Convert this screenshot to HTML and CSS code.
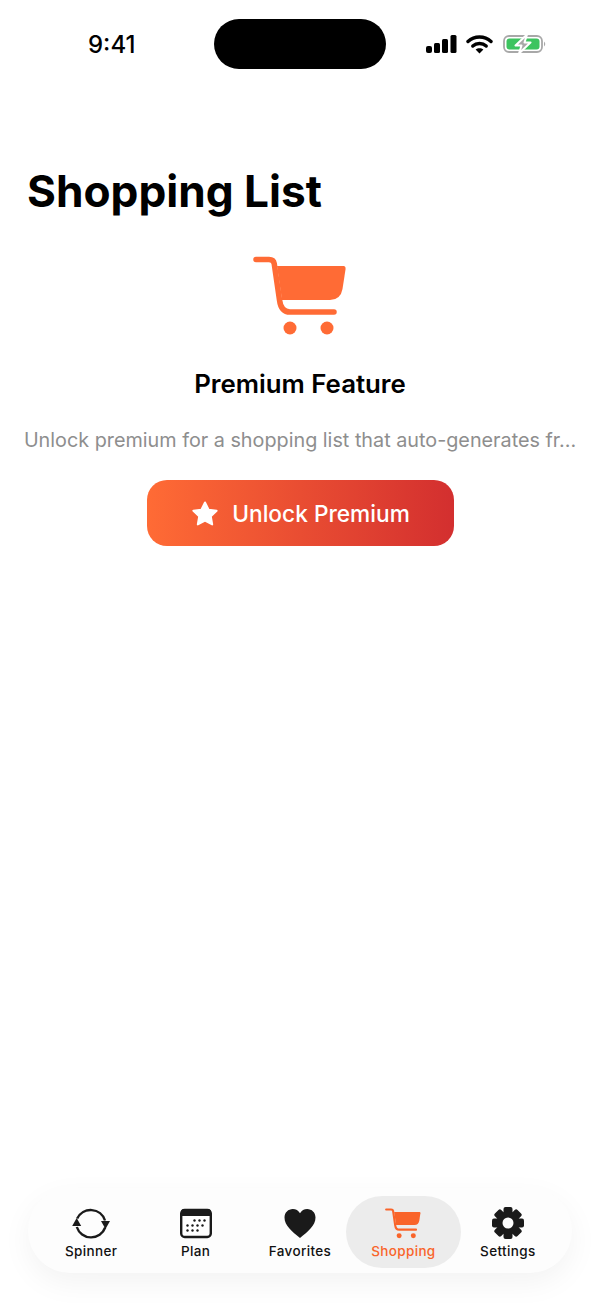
FILE: index.html
```html
<!DOCTYPE html>
<html lang="en">

<head>
    <meta charset="UTF-8">
    <meta name="viewport" content="width=device-width, initial-scale=1.0">
    <title>Shopping List</title>
    <link rel="stylesheet" href="styles.css">
</head>

<body>
    <svg class="defs" width="0" height="0">
        <symbol id="cart" viewBox="22 11 94 80">
            <path d="M25 14.5H38Q42.5 14.5 43.2 18.5L48.5 55Q50 67 59 67H103" fill="none" stroke="currentColor" stroke-width="5.5" stroke-linecap="round" stroke-linejoin="round" />
            <path d="M46 21H112.5Q115 21 114.5 24.5L111.5 44Q109.5 55 99 55H51Z" fill="currentColor" />
            <circle cx="59" cy="83" r="6.5" fill="currentColor" />
            <circle cx="96" cy="83" r="6.5" fill="currentColor" />
        </symbol>
    </svg>

    <div class="page">
        <div class="status-bar">
            <span class="time">9:41</span>
            <div class="island"></div>
            <div class="status-icons">
                <svg class="signal" width="31" height="20" viewBox="0 0 31 20">
                    <rect x="0" y="12" width="6" height="7" rx="2" />
                    <rect x="8" y="9" width="6" height="10" rx="1.5" />
                    <rect x="16" y="5" width="6" height="14" rx="1.5" />
                    <rect x="24.5" y="1" width="6" height="18" rx="1.5" />
                </svg>
                <svg class="wifi" width="27" height="20" viewBox="0 0 27 20">
                    <path d="M2 7.5C8.5 1.5 18.5 1.5 25 7.5" fill="none" stroke="#000" stroke-width="3.4" stroke-linecap="round" />
                    <path d="M6.8 12C10.5 8.6 16.5 8.6 20.2 12" fill="none" stroke="#000" stroke-width="3.4" stroke-linecap="round" />
                    <path d="M13.5 19.5L9.6 15.6C11.8 13.8 15.2 13.8 17.4 15.6Z" />
                </svg>
                <svg class="battery" width="44" height="20" viewBox="0 0 44 20">
                    <rect x="1" y="2" width="38" height="16" rx="5" fill="#fff" stroke="#a8a8a8" stroke-width="1.8" />
                    <rect x="3.5" y="4.5" width="33" height="11" rx="3" fill="#3dc45f" />
                    <path d="M41 7.5Q43.5 10 41 12.5Z" fill="#a8a8a8" />
                    <path d="M24 0.5L12.5 11.5H18.5L16 19.5L27.5 8.5H21.5Z" fill="#a8a8a8" stroke="#fff" stroke-width="2" stroke-linejoin="round" />
                </svg>
            </div>
        </div>

        <main class="content">
            <h1 class="page-title">Shopping List</h1>
            <div class="premium">
                <svg class="premium-cart">
                    <use href="#cart" />
                </svg>
                <h2 class="premium-title">Premium Feature</h2>
                <p class="premium-text">Unlock premium for a shopping list that auto-generates fr...</p>
                <button type="button" class="btn-unlock">
                    <svg width="28" height="27" viewBox="-1 0 28 27">
                        <path d="M14 2.5L17.6 9.8L25.6 10.8L19.8 16.4L21.2 24.4L14 20.6L6.8 24.4L8.2 16.4L2.4 10.8L10.4 9.8Z" fill="#fff" stroke="#fff" stroke-width="2" stroke-linejoin="round" />
                    </svg>
                    Unlock Premium
                </button>
            </div>
        </main>

        <nav class="tab-bar">
            <div class="tab">
                <svg class="tab-icon" width="42" height="34" viewBox="0 0 42 34">
                    <path d="M7.2 12.5A15 15 0 0 1 35 14.5" fill="none" stroke="#1a1a1a" stroke-width="2.4" />
                    <path d="M6.8 21A15 15 0 0 0 35.2 21.5" fill="none" stroke="#1a1a1a" stroke-width="2.4" />
                    <path d="M6.7 12L11.2 20H2.2Z" fill="#1a1a1a" />
                    <path d="M31 15H40L35.5 23Z" fill="#1a1a1a" />
                </svg>
                <span>Spinner</span>
            </div>
            <div class="tab">
                <svg class="tab-icon" width="32" height="34" viewBox="0 0 32 34">
                    <rect x="1.2" y="4" width="29.6" height="27" rx="3.5" fill="#fff" stroke="#1a1a1a" stroke-width="2.4" />
                    <path d="M1 10V6Q1 3 4 3H28Q31 3 31 6V10Z" fill="#1a1a1a" />
                    <g fill="#1a1a1a">
                        <circle cx="14.5" cy="14.5" r="1.2" />
                        <circle cx="19.5" cy="14.5" r="1.2" />
                        <circle cx="24.5" cy="14.5" r="1.2" />
                        <circle cx="7.5" cy="19.5" r="1.2" />
                        <circle cx="12.5" cy="19.5" r="1.2" />
                        <circle cx="17.5" cy="19.5" r="1.2" />
                        <circle cx="22.5" cy="19.5" r="1.2" />
                        <circle cx="7.5" cy="24.5" r="1.2" />
                        <circle cx="12.5" cy="24.5" r="1.2" />
                        <circle cx="17.5" cy="24.5" r="1.2" />
                    </g>
                </svg>
                <span>Plan</span>
            </div>
            <div class="tab">
                <svg class="tab-icon" width="32" height="34" viewBox="0 0 32 34">
                    <path d="M16 32C8 25.5 0.5 19.5 0.5 11.5C0.5 6.5 4.3 3 8.8 3C11.8 3 14.5 4.5 16 7.2C17.5 4.5 20.2 3 23.2 3C27.7 3 31.5 6.5 31.5 11.5C31.5 19.5 24 25.5 16 32Z" fill="#1a1a1a" />
                </svg>
                <span>Favorites</span>
            </div>
            <div class="tab tab-active">
                <svg class="tab-icon" width="36" height="34" viewBox="0 0 36 34">
                    <use href="#cart" width="36" height="31" y="2" />
                </svg>
                <span>Shopping</span>
            </div>
            <div class="tab tab-last">
                <svg class="tab-icon" width="34" height="34" viewBox="0 0 34 34">
                    <g fill="#1a1a1a">
                        <rect x="12.5" y="1" width="9" height="32" rx="2" />
                        <rect x="12.5" y="1" width="9" height="32" rx="2" transform="rotate(45 17 17)" />
                        <rect x="12.5" y="1" width="9" height="32" rx="2" transform="rotate(90 17 17)" />
                        <rect x="12.5" y="1" width="9" height="32" rx="2" transform="rotate(135 17 17)" />
                        <circle cx="17" cy="17" r="11.5" />
                    </g>
                    <circle cx="17" cy="17" r="5.5" fill="#fdfdfd" />
                </svg>
                <span>Settings</span>
            </div>
        </nav>
    </div>
</body>

</html>
```

FILE: styles.css
```css
* {
    box-sizing: border-box;
}

body {
    margin: 0;
    background: #fff;
    color: #000;
    font-family: Inter, "Liberation Sans", sans-serif;
}

.defs {
    display: block;
    height: 0;
}

.page {
    display: flex;
    flex-direction: column;
    height: 1303px;
    padding-bottom: 30px;
    overflow: hidden;
}

.status-bar {
    display: flex;
    align-items: center;
    height: 50px;
    margin-top: 19px;
    padding-left: 88px;
}

.time {
    width: 126px;
    font-size: 24px;
    font-weight: 500;
}

.island {
    width: 172px;
    height: 50px;
    border-radius: 25px;
    background: #000;
}

.status-icons {
    display: flex;
    align-items: center;
    gap: 9px;
    margin-left: 40px;
}

.status-icons .wifi {
    margin-right: 1px;
}

.content {
    flex: 1;
    padding: 93px 24px 0;
}

.page-title {
    margin: 0 0 0 3px;
    font-size: 44.2px;
    line-height: 58px;
    font-weight: 700;
}

.premium {
    display: flex;
    flex-direction: column;
    align-items: center;
    margin-top: 36px;
}

.premium-cart {
    width: 94px;
    height: 80px;
    color: #ff6b35;
}

.premium-title {
    margin: 32px 0 0;
    font-size: 25.8px;
    line-height: 32px;
    font-weight: 600;
}

.premium-text {
    margin: 26px 0 0;
    font-size: 19.8px;
    line-height: 28px;
    color: #8e8e8e;
    white-space: nowrap;
}

.btn-unlock {
    display: flex;
    align-items: center;
    justify-content: center;
    gap: 14px;
    width: 307px;
    height: 66px;
    margin-top: 26px;
    border: 0;
    border-radius: 20px;
    background: linear-gradient(to right, #ff6b35, #d32f2f);
    color: #fff;
    font-family: inherit;
    font-size: 22.7px;
    font-weight: 500;
}

.tab-bar {
    display: grid;
    grid-template-columns: repeat(5, 1fr);
    width: 544px;
    height: 85px;
    margin: 0 auto;
    padding: 8px 11px 5px;
    border-radius: 42px;
    background: #fdfdfd;
    box-shadow: 0 10px 30px rgba(0, 0, 0, 0.05);
}

.tab {
    display: flex;
    flex-direction: column;
    align-items: center;
    justify-content: center;
    border-radius: 36px;
    font-size: 13.5px;
    font-weight: 450;
    letter-spacing: 0.35px;
    color: #111;
}

.tab span {
    margin-top: 3px;
    line-height: 16px;
}

.tab-icon {
    display: block;
}

.tab-active {
    margin: 0 -4px 0 -6px;
    background: #ececec;
    color: #f9642a;
}

.tab-last {
    padding-right: 2px;
}
```
